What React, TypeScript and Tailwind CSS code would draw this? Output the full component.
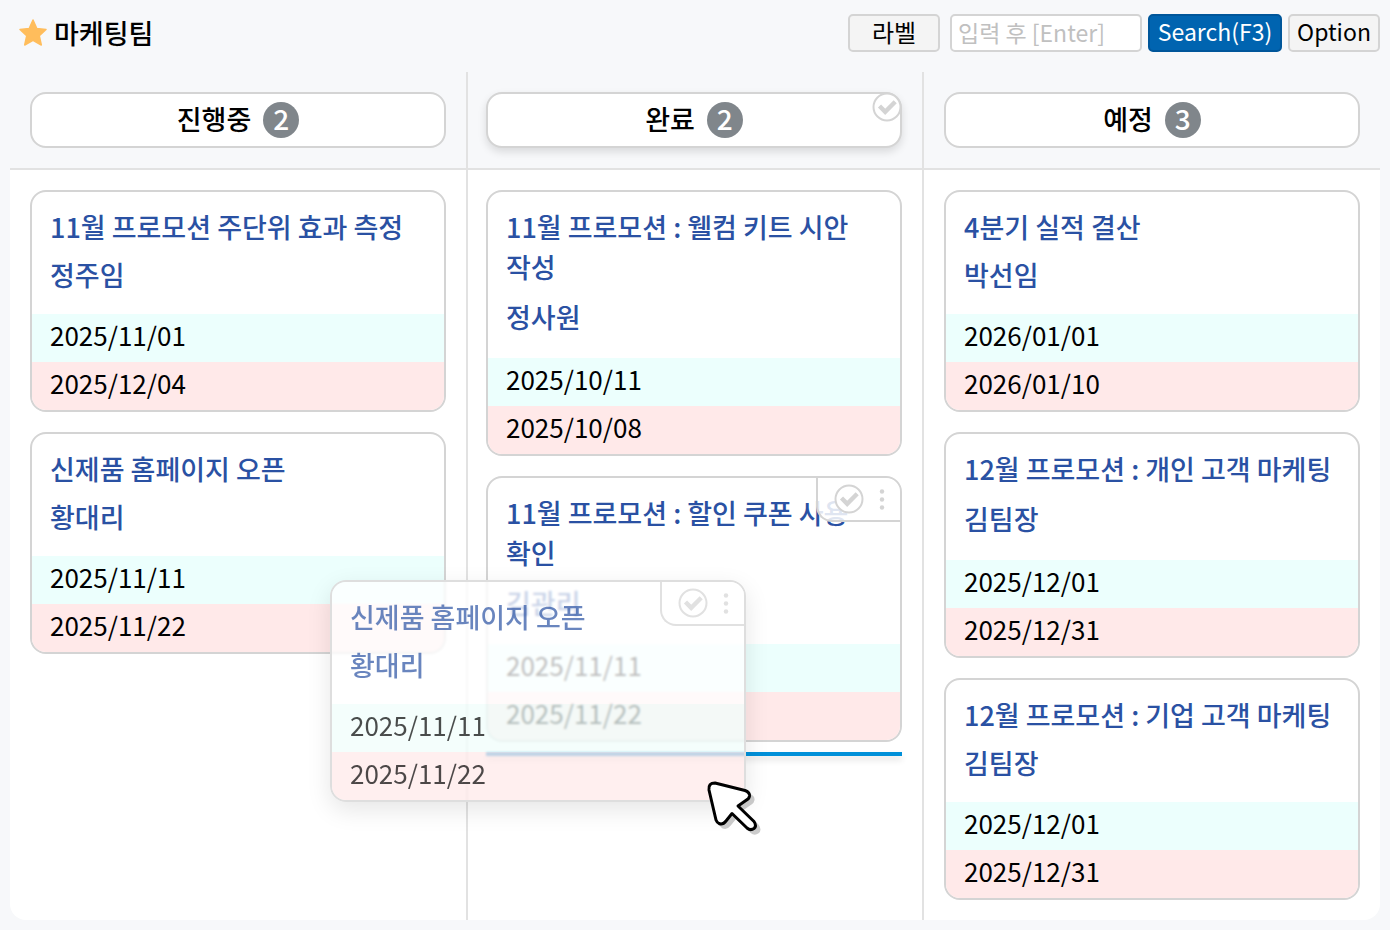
type Card = {
  id: string;
  title: string;
  owner: string;
  start: string;
  end: string;
  tall?: boolean;
  hovered?: boolean;
};

type Column = { name: string; edge: string; active?: boolean; cards: Card[] };

const columns: Column[] = [
  {
    name: "진행중",
    edge: "pl-5",
    cards: [
      { id: "a1", title: "11월 프로모션 주단위 효과 측정", owner: "정주임", start: "2025/11/01", end: "2025/12/04" },
      { id: "a2", title: "신제품 홈페이지 오픈", owner: "황대리", start: "2025/11/11", end: "2025/11/22" },
    ],
  },
  {
    name: "완료",
    edge: "border-l-2 pl-[18px]",
    active: true,
    cards: [
      { id: "b1", title: "11월 프로모션 : 웰컴 키트 시안 작성", owner: "정사원", start: "2025/10/11", end: "2025/10/08", tall: true },
      { id: "b2", title: "11월 프로모션 : 할인 쿠폰 사용 확인", owner: "김관리", start: "2025/11/11", end: "2025/11/22", tall: true, hovered: true },
    ],
  },
  {
    name: "예정",
    edge: "border-l-2 pl-5",
    cards: [
      { id: "c1", title: "4분기 실적 결산", owner: "박선임", start: "2026/01/01", end: "2026/01/10" },
      { id: "c2", title: "12월 프로모션 : 개인 고객 마케팅", owner: "김팀장", start: "2025/12/01", end: "2025/12/31", tall: true },
      { id: "c3", title: "12월 프로모션 : 기업 고객 마케팅", owner: "김팀장", start: "2025/12/01", end: "2025/12/31" },
    ],
  },
];

function CheckIcon() {
  return (
    <svg viewBox="0 0 30 30" className="size-[30px]" aria-hidden="true">
      <circle cx="15" cy="15" r="13.5" fill="#fff" stroke="#d4d4d4" strokeWidth="2" />
      <path d="M7.5 14 L13.2 19.8 L23.2 9.8" fill="none" stroke="#d4d4d4" strokeWidth="4.4" />
    </svg>
  );
}

function CardTools({ solid }: { solid?: boolean }) {
  return (
    <div
      className={
        "absolute right-0 top-0 flex h-11 w-[84px] items-center rounded-bl-2xl rounded-tr-[14px] border-b-2 border-l-2 border-[#d4d4d4] pl-4 " +
        (solid ? "bg-white" : "bg-white/85")
      }
    >
      <button type="button" aria-label="완료 처리">
        <CheckIcon />
      </button>
      <button type="button" aria-label="더보기" className="ml-3">
        <svg viewBox="0 0 12 30" className="h-[30px] w-3" fill="#d4d4d4" aria-hidden="true">
          <circle cx="6" cy="7.5" r="2.2" />
          <circle cx="6" cy="15.5" r="2.2" />
          <circle cx="6" cy="23.5" r="2.2" />
        </svg>
      </button>
    </div>
  );
}

function TaskCard({ card }: { card: Card }) {
  return (
    <article className="relative overflow-hidden rounded-2xl border-2 border-[#d4d4d4] bg-white">
      <div className="px-[18px] pb-[17px] pt-[15px] text-[27px] font-medium text-[#2a51a3]">
        <h3 className="break-keep leading-10">
          <a href="#card">{card.title}</a>
        </h3>
        <p className={card.tall ? "mt-[6px] leading-[48px]" : "mt-[6px] leading-[44px]"}>{card.owner}</p>
      </div>
      <p className="bg-[#ecfffd] px-[18px] pb-[6px] text-[26px] leading-[42px]">{card.start}</p>
      <p className="bg-[#ffe9e9] px-[18px] pb-[6px] text-[26px] leading-[42px]">{card.end}</p>
      {card.hovered && <CardTools />}
    </article>
  );
}

function DraggedCard({ card }: { card: Card }) {
  return (
    <article className="absolute left-80 top-[508px] w-[416px] overflow-hidden rounded-2xl border-2 border-[#dedede] shadow-[0_8px_24px_rgba(0,0,0,0.1)] backdrop-blur-[1px]">
      <div className="bg-white/75 px-[18px] pb-[17px] pt-[15px] text-[27px] font-medium text-[#2a51a3]/70">
        <h3 className="break-keep leading-10">{card.title}</h3>
        <p className="mt-[6px] leading-[44px]">{card.owner}</p>
      </div>
      <p className="bg-[#f0fdfb]/75 px-[18px] pb-[6px] text-[26px] leading-[42px] text-black/70">{card.start}</p>
      <p className="bg-[#ffe9e9]/75 px-[18px] pb-[6px] text-[26px] leading-[42px] text-black/70">{card.end}</p>
      <div className="opacity-70">
        <CardTools solid />
      </div>
    </article>
  );
}

const pointerPath =
  "M5 10 Q4 3 11 3 L41 10.500 Q46 12.500 45.500 16 Q45 19 42.500 20 L34 26 L50 41.500 Q53 46 50 48.500 Q46.500 51 43 48 L28 33.500 L22 41 Q19 45 15 43.500 Q13 42.500 12 40 Z";

function Pointer() {
  return (
    <svg viewBox="0 0 60 56" className="absolute left-[694px] top-[708px] h-14 w-[60px]" aria-hidden="true">
      <path d={pointerPath} transform="translate(4 4)" fill="#000" stroke="#000" strokeWidth="2" strokeLinejoin="round" opacity="0.2" />
      <path d={pointerPath} fill="#fff" stroke="#000" strokeWidth="3" strokeLinejoin="round" />
    </svg>
  );
}

export default function App() {
  return (
    <div className="min-h-screen bg-[#f7f8fa] px-[10px] pb-[10px] font-['Noto_Sans_CJK_KR','Noto_Sans',sans-serif] text-black">
      <header className="flex h-[72px] items-start justify-between pt-[14px]">
        <div className="flex h-[38px] items-center gap-[6px] pl-2">
          <svg viewBox="0 0 30 30" className="size-[30px]" aria-hidden="true">
            <path
              d="M15 2 L18.800 10.500 L28 11.500 L21.300 17.800 L23.300 27 L15 22.300 L6.700 27 L8.700 17.800 L2 11.500 L11.200 10.500 Z"
              fill="#ffbd5c"
              stroke="#ffbd5c"
              strokeWidth="1.500"
              strokeLinejoin="round"
            />
          </svg>
          <h1 className="text-[27px] font-medium leading-[38px]">마케팅팀</h1>
        </div>
        <form className="flex" onSubmit={(e) => e.preventDefault()}>
          <button type="button" className="h-[38px] w-[92px] rounded-[5px] border-2 border-[#d4d4d4] bg-[#f4f4f4] pb-[2px] text-2xl leading-8">
            라벨
          </button>
          <input
            type="text"
            aria-label="검색어"
            placeholder="입력 후 [Enter]"
            className="ml-[10px] h-[38px] w-48 rounded-[5px] border-2 border-[#d4d4d4] bg-white px-[6px] pb-[2px] text-[23px] placeholder:text-[#c0c0c0]"
          />
          <button type="submit" className="ml-[6px] h-[38px] w-[134px] rounded-[5px] border-2 border-[#00569a] bg-[#0064b0] pb-1 text-[23px] leading-[30px] text-white">
            Search(F3)
          </button>
          <button type="button" className="ml-[6px] h-[38px] w-[92px] rounded-[5px] border-2 border-[#d4d4d4] bg-[#f4f4f4] pb-1 text-[23px] leading-[30px]">
            Option
          </button>
        </form>
      </header>

      <main className="relative grid grid-cols-[456fr_456fr_458fr] overflow-hidden rounded-b-2xl">
        {columns.map((column) => (
          <section key={column.name} className="flex flex-col">
            <div className={"border-b-2 border-[#e2e2e2] py-5 pr-5 " + column.edge}>
              <div
                className={
                  "relative flex h-14 items-center justify-center gap-3 rounded-2xl border-2 border-[#d4d4d4] bg-white " +
                  (column.active ? "shadow-[0_4px_8px_rgba(0,0,0,0.12)]" : "")
                }
              >
                <h2 className="pb-[2px] text-[27px] font-medium leading-10">{column.name}</h2>
                <span className="flex size-9 items-center justify-center rounded-full bg-[#80868b] pb-1 text-[28px] font-medium leading-8 text-white">
                  {column.cards.length}
                </span>
                {column.active && (
                  <button type="button" aria-label="모두 완료" className="absolute -right-[2px] -top-[2px]">
                    <CheckIcon />
                  </button>
                )}
              </div>
            </div>
            <div className={"flex grow flex-col gap-5 border-[#e2e2e2] bg-white py-5 pr-5 " + column.edge}>
              {column.cards.map((card) => (
                <TaskCard key={card.id} card={card} />
              ))}
              {column.active && <div className="-mt-[10px] h-1 shrink-0 bg-[#0090d9] shadow-[0_4px_6px_rgba(0,0,0,0.12)]" />}
            </div>
          </section>
        ))}
        <DraggedCard card={columns[0].cards[1]} />
        <Pointer />
      </main>
    </div>
  );
}
